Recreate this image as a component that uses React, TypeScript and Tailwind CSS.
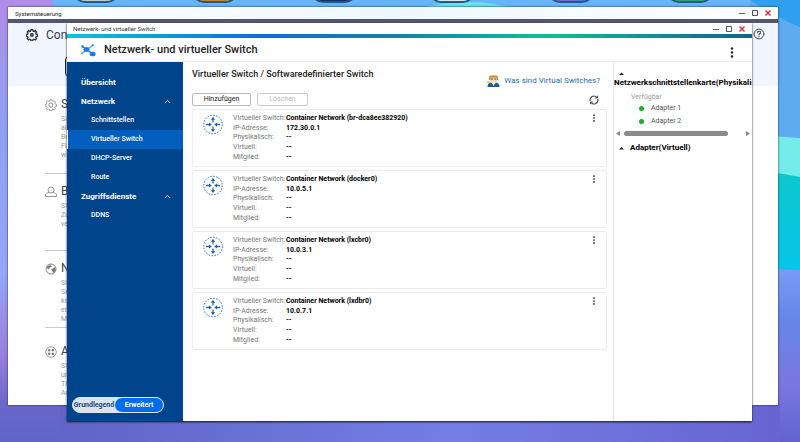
import { useState } from 'react'
import type { ReactNode } from 'react'
import { ChevronUp } from 'lucide-react'

const switches = [
  { name: 'Container Network (br-dca8ee382920)', ip: '172.30.0.1' },
  { name: 'Container Network (docker0)', ip: '10.0.5.1' },
  { name: 'Container Network (lxcbr0)', ip: '10.0.3.1' },
  { name: 'Container Network (lxdbr0)', ip: '10.0.7.1' },
]

const groups = [
  { title: 'Netzwerk', items: ['Schnittstellen', 'Virtueller Switch', 'DHCP-Server', 'Route'] },
  { title: 'Zugriffsdienste', items: ['DDNS'] },
]

const categories = [
  { letter: 'S', size: 'h-[77px] border-b', icon: <GearIcon className="size-3" />, lines: ['Si', 'al', 'Be', 'Fi', 'w'] },
  { letter: 'B', size: 'h-[67px] border-b', icon: <PersonIcon />, lines: ['Si', 'Zu', 've'] },
  { letter: 'N', size: 'h-[67px] border-b', icon: <GlobeIcon />, lines: ['Si', 'Se', 'ko', 'ei', 'M'] },
  { letter: 'A', size: 'pt-[6px]', icon: <AppsIcon />, lines: ['Si', 'un', 'Th', 'Ar'] },
]

const dock = [
  'bg-[#b9cfd2]',
  'bg-[#c98a3a]',
  'bg-[#12305f]',
  'bg-[#d5eee8]',
  'bg-linear-to-r from-[#9a55c4] to-[#1f7fd6]',
  'bg-[#2fa876]',
]

function App() {
  return (
    <div className="relative h-screen overflow-hidden bg-[#6c6fd8] font-[Roboto,sans-serif] text-[#222]">
      <Wallpaper />
      <div className="absolute -top-9 left-[73px] right-[87px] flex justify-between">
        {dock.map((color) => (
          <div key={color} className={`h-[39px] w-[46px] rounded-xl border-2 border-[#235a85] ${color}`} />
        ))}
      </div>
      <ControlPanelWindow />
      <NetworkWindow />
    </div>
  )
}

function Wallpaper() {
  return (
    <svg className="absolute inset-0 size-full" viewBox="0 0 800 442" preserveAspectRatio="none" aria-hidden="true">
      <defs>
        <linearGradient id="left" x1="0" y1="0" x2="0" y2="1">
          <stop offset="0" stopColor="#b08de8" />
          <stop offset=".3" stopColor="#8fa0f2" />
          <stop offset=".62" stopColor="#94a6f6" />
          <stop offset=".8" stopColor="#9a80dc" />
          <stop offset=".92" stopColor="#6a66cc" />
          <stop offset="1" stopColor="#5f66c6" />
        </linearGradient>
        <linearGradient id="right" x1="0" y1="0" x2="0" y2="1">
          <stop offset="0" stopColor="#7a9cf4" />
          <stop offset=".3" stopColor="#6485ea" />
          <stop offset=".65" stopColor="#7b78e0" />
          <stop offset="1" stopColor="#6462d0" />
        </linearGradient>
        <linearGradient id="floor" x1="0" y1="0" x2="1" y2="0">
          <stop offset="0" stopColor="#6065c6" />
          <stop offset=".55" stopColor="#747ee4" />
          <stop offset="1" stopColor="#6864d2" />
        </linearGradient>
        <linearGradient id="teal" x1="0" y1="0" x2="0" y2="1">
          <stop offset="0" stopColor="#0cc8cc" />
          <stop offset="1" stopColor="#08c4ea" />
        </linearGradient>
      </defs>
      <path d="M0 0H400V442H0z" fill="url(#left)" />
      <path d="M52 0H800V200H100z" fill="#66b4fa" />
      <path d="M420 8Q470-4 512 8z" fill="#64e4ee" />
      <path d="M750 0H800V140H750z" fill="#5fabf2" />
      <path d="M750 0H800V27Q775 17 750 0z" fill="#2fa0ee" />
      <path d="M770 136Q785 137 800 138V180H770z" fill="#74ecec" />
      <path d="M770 172Q785 174 800 177V275H770z" fill="url(#teal)" />
      <path d="M770 268Q788 270 800 270V442H770z" fill="url(#right)" />
      <path d="M60 404H780V442H60z" fill="url(#floor)" />
    </svg>
  )
}

function WindowButtons() {
  return (
    <div className="flex items-center gap-[7px]">
      <button type="button" aria-label="Minimieren">
        <svg className="size-[6px]" viewBox="0 0 6 6"><path d="M0 3.500h6" stroke="#666" /></svg>
      </button>
      <button type="button" aria-label="Maximieren">
        <svg className="size-[6px]" viewBox="0 0 6 6"><path d="M.500.500h5v5h-5z" fill="none" stroke="#555" /></svg>
      </button>
      <button type="button" aria-label="Schließen">
        <svg className="size-[6px]" viewBox="0 0 6 6"><path d="M.5.5l5 5M5.500.5l-5 5" stroke="#d9263a" strokeWidth="1.400" /></svg>
      </button>
    </div>
  )
}

function ControlPanelWindow() {
  return (
    <section className="absolute bottom-[37px] left-2 right-[22px] top-[7px] flex flex-col overflow-hidden bg-white shadow-[0_0_2px_#223]">
      <header className="flex h-3 shrink-0 items-center justify-between bg-linear-to-r from-white via-[#edf8fe] to-white pl-[7px] pr-[7px] text-[6px]">
        <span>Systemsteuerung</span>
        <WindowButtons />
      </header>
      <div className="h-1 shrink-0 bg-[#54566f]" />
      <div className="flex h-[63px] shrink-0 items-start justify-between bg-[#f0f5ff] pl-[18px] pr-[13px] pt-[5px]">
        <div>
          <div className="flex items-center gap-2">
            <GearIcon className="size-3 text-[#2f3547]" bold />
            <h1 className="text-[12px] leading-[14px] text-[#333a4d]">Con</h1>
          </div>
          <div className="ml-[39px] mt-[14px] h-[21px] w-8 rounded-[4px] border border-[#222]" />
        </div>
        <button type="button" aria-label="Hilfe" className="text-[#444b5a]">
          <svg className="size-3" viewBox="0 0 12 12" fill="none" stroke="currentColor" strokeLinecap="round">
            <circle cx="6" cy="6" r="4.900" />
            <path d="M4.500 4.800C4.600 2.700 7.600 2.900 7.500 4.700 7.400 5.700 6 5.800 6 7" strokeWidth="1.100" />
            <path d="M6 8.700v.1" strokeWidth="1.200" />
          </svg>
        </button>
      </div>
      <div className="flex flex-col gap-[10px] pl-[37px] pt-[11px]">
        {categories.map((category) => (
          <div key={category.letter} className={`flex w-40 shrink-0 items-start gap-1 border-[#ccc] ${category.size}`}>
            <span className="pt-[2px] text-[#777]">{category.icon}</span>
            <div>
              <h2 className="text-[12px] leading-[15px] text-[#444]">{category.letter}</h2>
              <p className="whitespace-pre-line pt-[3px] text-[7px] leading-[9px] text-[#999]">{category.lines.join('\n')}</p>
            </div>
          </div>
        ))}
      </div>
    </section>
  )
}

function NetworkWindow() {
  return (
    <section className="absolute bottom-[21px] left-[67px] right-[48px] top-[23px] flex flex-col overflow-hidden bg-white shadow-[0_1px_2px_#112]">
      <header className="flex h-[11px] shrink-0 items-center justify-between pl-[6px] pr-[7px] text-[6px] text-[#333]">
        <span>Netzwerk- und virtueller Switch</span>
        <WindowButtons />
      </header>
      <div className="h-1 shrink-0 bg-[linear-gradient(90deg,#0cc3e0,#0c6fd8_28%,#1283a8_48%,#0fbf92_70%,#12638a)]" />
      <div className="flex h-6 shrink-0 items-center justify-between border-b border-[#eee] pl-[13px] pr-[14px]">
        <div className="flex items-center gap-2">
          <NetworkLogo />
          <h1 className="text-[11px] font-medium leading-[14px]">Netzwerk- und virtueller Switch</h1>
        </div>
        <button type="button" aria-label="Menü" className="pt-[5px]">
          <MoreIcon className="h-[11px] w-3" />
        </button>
      </div>
      <div className="flex min-h-0 flex-1">
        <Sidebar />
        <SwitchList />
        <AdapterPanel />
      </div>
    </section>
  )
}

function Sidebar() {
  const [active, setActive] = useState('Virtueller Switch')

  return (
    <aside className="flex w-[116px] shrink-0 flex-col justify-between bg-[#00458c] text-[7px] text-white">
      <nav className="pt-[11px]">
        <a href="#uebersicht" className="flex h-[19px] items-center pl-[14px] text-[8px] font-bold">Übersicht</a>
        {groups.map((group) => (
          <div key={group.title}>
            <button type="button" className="flex h-[19px] w-full items-center justify-between pl-[14px] pr-[11px] text-[8px] font-bold">
              {group.title}
              <ChevronUp className="size-[9px]" />
            </button>
            {group.items.map((item) => (
              <a
                key={item}
                href={`#${item}`}
                onClick={() => setActive(item)}
                className={`flex h-[19px] items-center border-l pl-[23px] font-medium ${
                  item === active ? 'border-white bg-[#005fbe]' : 'border-transparent'
                }`}
              >
                {item}
              </a>
            ))}
          </div>
        ))}
      </nav>
      <div className="mb-2 ml-[5px] flex h-4 w-[92px] items-center rounded-full border border-[#dce8f6] bg-[#d9e5f3] text-[7px] font-bold">
        <button type="button" className="flex-1 text-[#234a7c]">Grundlegend</button>
        <button type="button" className="h-full w-12 rounded-full bg-[#006cf0]">Erweitert</button>
      </div>
    </aside>
  )
}

function SwitchList() {
  return (
    <main className="flex min-w-0 flex-1 flex-col pl-[9px] pr-[6px]">
      <div className="flex h-[31px] shrink-0 items-start justify-between pr-[7px] pt-[7px]">
        <h2 className="text-[9px] font-medium leading-[11px]">Virtueller Switch / Softwaredefinierter Switch</h2>
        <a href="#hilfe" className="flex items-center gap-1 pt-[5px] text-[8px] leading-[13px] text-[#1d6fa8]">
          <HelperIcon />
          Was sind Virtual Switches?
        </a>
      </div>
      <div className="flex h-[13px] shrink-0 items-center justify-between pr-2">
        <div className="flex gap-[6px] text-[7px]">
          <button type="button" className="h-[13px] w-[59px] rounded-[2px] border border-[#bbb] leading-[11px]">Hinzufügen</button>
          <button type="button" disabled className="h-[13px] w-[51px] rounded-[2px] border border-[#ccc] leading-[11px] text-[#bbb]">Löschen</button>
        </div>
        <button type="button" aria-label="Aktualisieren">
          <svg className="size-[10px]" viewBox="0 0 10 10" fill="none" stroke="#444">
            <path d="M1.300 6A3.800 3.800 0 0 1 7.800 2.400M8.700 4A3.800 3.800 0 0 1 2.200 7.600" strokeWidth="1.100" />
            <path d="M8.400.700v2.300H6.200M1.600 9.300V7h2.200" />
          </svg>
        </button>
      </div>
      <ul className="flex flex-col gap-[3px] pt-[3px]">
        {switches.map((entry) => (
          <li key={entry.name} className="flex h-[58px] items-start rounded-[2px] border border-[#ececec] pl-[9px] pr-2 pt-[4px]">
            <SwitchIcon />
            <dl className="ml-[9px] grid h-12 flex-1 grid-cols-[53px_1fr] grid-rows-5 items-center text-[7px] leading-[9px]">
              <Row label="Virtueller Switch:">{entry.name}</Row>
              <Row label="IP-Adresse:">{entry.ip}</Row>
              <Row label="Physikalisch:">--</Row>
              <Row label="Virtuell:">--</Row>
              <Row label="Mitglied:">--</Row>
            </dl>
            <button type="button" aria-label="Optionen">
              <MoreIcon className="size-2" />
            </button>
          </li>
        ))}
      </ul>
    </main>
  )
}

function Row({ label, children }: { label: string; children: ReactNode }) {
  return (
    <>
      <dt className="whitespace-nowrap text-[#777]">{label}</dt>
      <dd className="whitespace-nowrap font-bold text-black">{children}</dd>
    </>
  )
}

function AdapterPanel() {
  return (
    <aside className="flex w-[139px] shrink-0 flex-col overflow-hidden border-l border-[#e8e8e8] pt-[9px] text-[7px]">
      <svg className="ml-[5px] h-[6px] w-[5px]" viewBox="0 0 5 6"><path d="M0 4l2.500-2.500L5 4z" fill="#222" /></svg>
      <h3 className="whitespace-nowrap text-[8px] font-bold leading-[11px] text-black">Netzwerkschnittstellenkarte(Physikalisch)</h3>
      <p className="pl-[17px] pt-[5px] leading-[9px] text-[#999]">Verfügbar</p>
      <ul className="flex flex-col pl-[25px] text-[#555]">
        {['Adapter 1', 'Adapter 2'].map((adapter) => (
          <li key={adapter} className="flex h-[13px] items-center gap-[7px]">
            <span className="size-[5px] rounded-full bg-[#16b422]" />
            {adapter}
          </li>
        ))}
      </ul>
      <div className="flex items-center gap-1 px-[2px] pt-[3px]">
        <svg className="h-[5px] w-1" viewBox="0 0 4 5"><path d="M4 0v5L0 2.500z" fill="#888" /></svg>
        <div className="h-[5px] flex-1">
          <div className="h-full w-[88%] rounded-full bg-[#8b8b8b]" />
        </div>
        <svg className="h-[5px] w-1" viewBox="0 0 4 5"><path d="M0 0v5l4-2.500z" fill="#888" /></svg>
      </div>
      <div className="flex items-center gap-[6px] pl-[5px] pt-[6px]">
        <svg className="h-[6px] w-[5px]" viewBox="0 0 5 6"><path d="M0 4.500L2.500 2 5 4.500z" fill="#222" /></svg>
        <h3 className="text-[8px] font-bold leading-[11px] text-black">Adapter(Virtuell)</h3>
      </div>
    </aside>
  )
}

function MoreIcon({ className }: { className: string }) {
  return (
    <svg className={className} viewBox="0 0 8 11" fill="#222">
      <circle cx="4" cy="1.500" r="1.200" />
      <circle cx="4" cy="5.500" r="1.200" />
      <circle cx="4" cy="9.500" r="1.200" />
    </svg>
  )
}

function SwitchIcon() {
  return (
    <svg className="size-[22px] shrink-0" viewBox="0 0 22 22" fill="none" stroke="#1c6fc4">
      <circle cx="11" cy="10.500" r="9.300" strokeWidth="1" strokeDasharray="1.500 1.420" />
      <path d="M11 4v4.500M11 17v-4.500M4 10.500h4M18 10.500h-4" strokeWidth="1.300" />
      <path d="M11 3l2.200 2.800H8.800zM11 18l2.200-2.800H8.800zM9.800 10.500L7 8.400v4.200zM12.200 10.500L15 8.400v4.200z" fill="#1c5aa8" stroke="none" />
    </svg>
  )
}

function NetworkLogo() {
  return (
    <svg className="size-4" viewBox="0 0 16 16" aria-hidden="true">
      <path d="M1.500 11.500L13 3.200" stroke="#4aa3f5" strokeWidth="1.200" />
      <path d="M2.500 4.500L12 11.500" stroke="#1b7bea" strokeWidth="1.500" />
      <ellipse cx="6.500" cy="7.500" rx="3" ry="2.500" fill="#1b7bea" />
      <circle cx="2.500" cy="4.500" r="1.300" fill="#1b7bea" />
      <circle cx="2" cy="11.200" r="1" fill="#58aaf7" />
      <circle cx="12.800" cy="3.300" r="1" fill="#1b7bea" />
      <ellipse cx="12.600" cy="12" rx="3" ry="2.300" fill="#1b7bea" />
    </svg>
  )
}

function HelperIcon() {
  return (
    <svg className="h-3 w-[13px]" viewBox="0 0 13 12" aria-hidden="true">
      <path d="M2 5V2.500Q2 .500 4 .500h5q2 0 2 2V5z" fill="#c08a2a" />
      <path d="M3 2.500h7V6q-3.500 3.500-7 0z" fill="#f6d9ac" />
      <path d="M3.500 4h2.500M7 4h2.500" stroke="#5b421f" strokeWidth=".9" />
      <path d="M.500 12Q.500 8 4 7.500l2.500 2L9 7.500q3.500.500 3.500 4.500z" fill="#1c5f96" />
      <path d="M4.500 7.500h4L6.500 11z" fill="#fff" />
      <path d="M1 5.500l2 2-1.500 1.500L0 7.500z" fill="#e9b95d" />
    </svg>
  )
}

function GearIcon({ className, bold }: { className: string; bold?: boolean }) {
  return (
    <svg className={className} viewBox="0 0 24 24" fill="none" stroke="currentColor" strokeWidth={bold ? 3 : 1.600}>
      <path d="M10 1.500h4l.6 3 2.200.9 2.600-1.700 2.900 2.900-1.700 2.600.9 2.200 3 .6v4l-3 .6-.9 2.200 1.700 2.600-2.900 2.900-2.600-1.700-2.200.9-.6 3h-4l-.6-3-2.200-.9-2.600 1.700-2.900-2.900 1.700-2.600-.9-2.200-3-.6v-4l3-.6.9-2.200-1.700-2.600 2.900-2.900 2.600 1.700 2.200-.9z" transform="translate(1 0) scale(.9)" />
      <circle cx="11.800" cy="12" r={bold ? 2.500 : 4} />
    </svg>
  )
}

function PersonIcon() {
  return (
    <svg className="size-3" viewBox="0 0 24 24" fill="none" stroke="currentColor" strokeWidth="1.500">
      <circle cx="12" cy="8" r="6" />
      <path d="M8 13c-4 1-7 2-7 5v3h22v-3c0-3-3-4-7-5" />
    </svg>
  )
}

function GlobeIcon() {
  return (
    <svg className="size-3" viewBox="0 0 24 24" fill="none" stroke="currentColor" strokeWidth="1.800">
      <circle cx="12" cy="12" r="10" />
      <path d="M4 8l6-4 3 3-4 2-1 3-4-2zM13 13l6-4 2 5-4 6-2-4z" fill="currentColor" strokeWidth="1" />
    </svg>
  )
}

function AppsIcon() {
  return (
    <svg className="size-3" viewBox="0 0 24 24" fill="none" stroke="currentColor" strokeWidth="1.500">
      <circle cx="12" cy="12" r="10.500" />
      <path d="M7 7h3v3H7zM14 7h3v3h-3zM7 14h3v3H7zM14 14h3v3h-3z" fill="currentColor" />
    </svg>
  )
}

export default App
